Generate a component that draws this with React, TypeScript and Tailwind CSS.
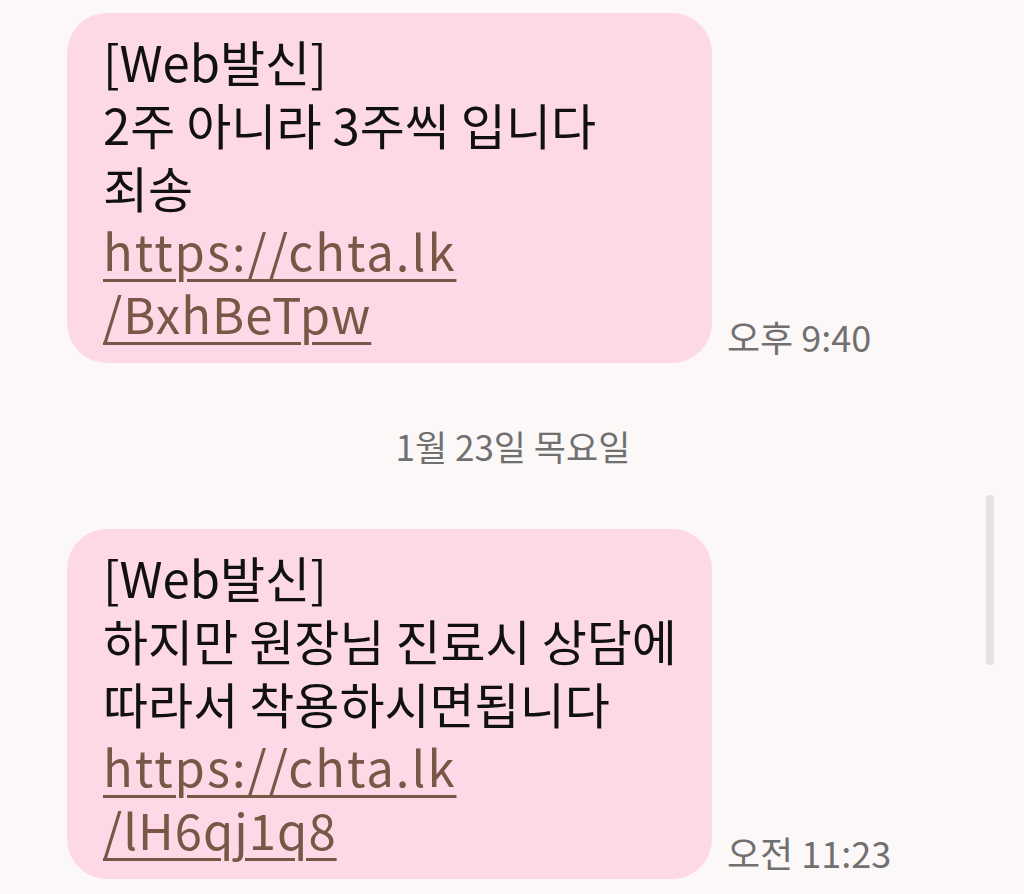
import React from "react";

const font = { fontFamily: '"Noto Sans CJK KR", "Noto Sans", sans-serif' };

function Bubble({ lines, link1, link2, time }: { lines: string[]; link1: string; link2: string; time: string }) {
  return (
    <div className="flex items-end pl-[67px]">
      <div className="w-[645px] rounded-[40px] bg-[#fdd9e7] pl-[36px] pr-6 pt-[16px] pb-[19px] text-[49px] leading-[63px] text-[#111111]">
        {lines.map((l, i) => (
          <div key={i} className="whitespace-nowrap">{l}</div>
        ))}
        <div className="text-[#7a5646] underline decoration-[3px] underline-offset-[8px] tracking-[2px]">{link1}</div>
        <div className="text-[#7a5646] underline decoration-[3px] underline-offset-[8px] tracking-[1px]">{link2}</div>
      </div>
      <div className="ml-[15px] mb-[7px] text-[36px] leading-[40px] text-[#707070] whitespace-nowrap">{time}</div>
    </div>
  );
}

export default function App() {
  return (
    <div className="relative w-[1024px] h-[894px] overflow-hidden bg-[#fdf8f8]" style={font}>
      <div className="pt-[13px]">
        <Bubble
          lines={["[Web발신]", "2주 아니라 3주씩 입니다", "죄송"]}
          link1="https://chta.lk"
          link2="/BxhBeTpw"
          time="오후 9:40"
        />
        <div className="mt-[62px] mb-[62px] text-center text-[35px] leading-[42px] text-[#707070] pl-[2px]">1월 23일 목요일</div>
        <Bubble
          lines={["[Web발신]", "하지만 원장님 진료시 상담에", "따라서 착용하시면됩니다"]}
          link1="https://chta.lk"
          link2="/lH6qj1q8"
          time="오전 11:23"
        />
      </div>
      <div className="absolute left-[986px] top-[495px] h-[170px] w-[8px] rounded-full bg-[#e4e2e2]" />
    </div>
  );
}
